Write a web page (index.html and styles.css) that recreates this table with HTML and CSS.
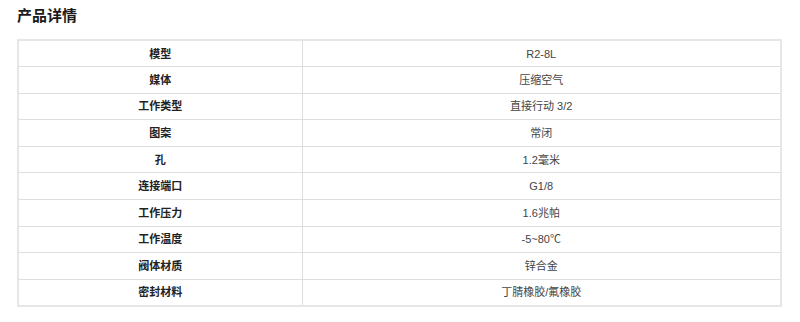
FILE: index.html
```html
<!DOCTYPE html>
<html lang="zh-CN">
<head>
<meta charset="utf-8">
<title>产品详情</title>
<link rel="stylesheet" href="styles.css">
</head>
<body>
<div class="page">
  <h2 class="title">产品详情</h2>
  <table class="spec">
    <tbody>
      <tr><th>模型</th><td>R2-8L</td></tr>
      <tr><th>媒体</th><td>压缩空气</td></tr>
      <tr><th>工作类型</th><td>直接行动 3/2</td></tr>
      <tr><th>图案</th><td>常闭</td></tr>
      <tr><th>孔</th><td>1.2毫米</td></tr>
      <tr><th>连接端口</th><td>G1/8</td></tr>
      <tr><th>工作压力</th><td>1.6兆帕</td></tr>
      <tr><th>工作温度</th><td>-5~80℃</td></tr>
      <tr><th>阀体材质</th><td>锌合金</td></tr>
      <tr><th>密封材料</th><td>丁腈橡胶/氟橡胶</td></tr>
    </tbody>
  </table>
</div>
</body>
</html>
```
FILE: styles.css
```css
* { box-sizing: border-box; }
html, body {
  margin: 0;
  padding: 0;
  background: #fff;
}
body {
  font-family: "Liberation Sans", "Noto Sans CJK SC", Arial, sans-serif;
  color: #333;
}
.page {
  padding: 5px 18px 0 17px;
}
.title {
  margin: 0;
  font-size: 15px;
  line-height: 20px;
  font-weight: bold;
  color: #1a1a1a;
  font-family: "Noto Sans CJK SC", sans-serif;
}
.spec {
  margin-top: 14px;
  width: 765px;
  border-collapse: collapse;
  border: 2px solid #e6e6e6;
  font-size: 11px;
}
.spec th,
.spec td {
  border: 1px solid #dedede;
  height: 26.6px;
  padding: 0 4px;
  text-align: center;
  vertical-align: middle;
  line-height: 14px;
}
.spec th {
  width: 284px;
  font-weight: bold;
  color: #222;
}
.spec td {
  font-weight: normal;
  color: #444;
}
```
